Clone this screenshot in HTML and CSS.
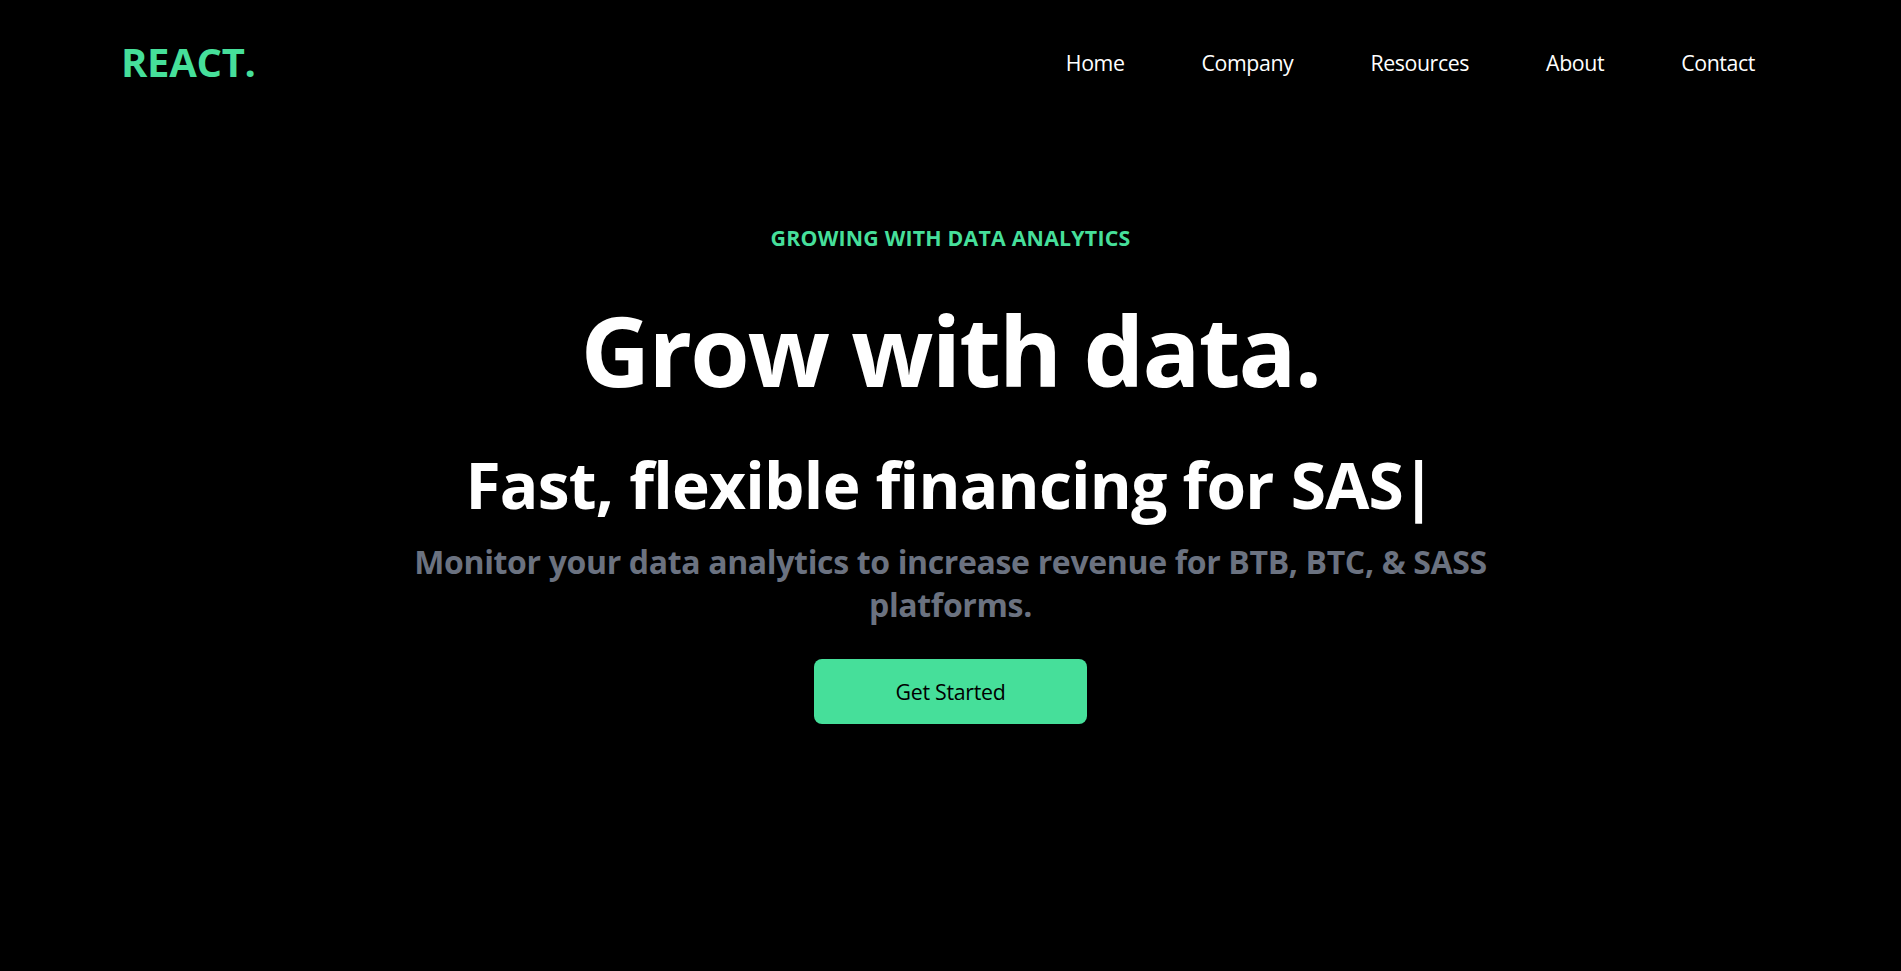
FILE: index.html
```html
<!DOCTYPE html>
<html lang="en">
<head>
<meta charset="utf-8">
<title>REACT.</title>
<link rel="stylesheet" href="styles.css">
</head>
<body>
  <header class="nav">
    <h1 class="logo">REACT.</h1>
    <ul class="menu">
      <li>Home</li>
      <li>Company</li>
      <li>Resources</li>
      <li>About</li>
      <li>Contact</li>
    </ul>
  </header>
  <main class="hero">
    <p class="eyebrow">GROWING WITH DATA ANALYTICS</p>
    <h2 class="title">Grow with data.</h2>
    <div class="typed-row">
      <p class="typed-static">Fast, flexible financing for</p>
      <span class="typed-word">SAS</span><span class="typed-cursor">|</span>
    </div>
    <p class="subtitle">Monitor your data analytics to increase revenue for BTB, BTC, &amp; SASS platforms.</p>
    <button class="btn">Get Started</button>
  </main>
</body>
</html>
```

FILE: styles.css
```css
html, body {
  margin: 0;
  padding: 0;
  background: #000;
}

body {
  font-family: "Open Sans", "Noto Sans", "DejaVu Sans", sans-serif;
  color: #fff;
  overflow: hidden;
}

.nav {
  display: flex;
  justify-content: space-between;
  align-items: center;
  height: 128px;
  max-width: 1653px;
  margin: 0 auto;
}

.logo {
  margin: 0 0 0 -3px;
  padding-bottom: 5px;
  font-size: 40px;
  font-weight: 700;
  color: #46df9a;
  letter-spacing: -0.3px;
}

.menu {
  display: flex;
  gap: 35px;
  list-style: none;
  margin: 0;
  padding: 0 1px 2px 0;
}

.menu li {
  padding: 0 21px;
  font-size: 21.33px;
  line-height: 32px;
  letter-spacing: -0.4px;
}

.hero {
  display: flex;
  flex-direction: column;
  align-items: center;
  text-align: center;
  padding-top: 94px;
}

.eyebrow {
  margin: 0;
  font-size: 21.33px;
  line-height: 32px;
  font-weight: 700;
  color: #46df9a;
  letter-spacing: 0.2px;
}

.title {
  margin: 48px 0 0;
  font-size: 96px;
  line-height: 96px;
  font-weight: 700;
  letter-spacing: -1.8px;
}

.typed-row {
  display: flex;
  justify-content: center;
  align-items: center;
  margin-top: 55px;
  font-size: 64px;
  line-height: 64px;
  font-weight: 700;
  letter-spacing: -0.75px;
}

.typed-static {
  margin: 0;
}

.typed-word {
  padding-left: 17px;
}

.typed-cursor {
  font-weight: 700;
  margin-left: -2px;
}

.subtitle {
  margin: 24px 0 0;
  max-width: 1110px;
  font-size: 32px;
  line-height: 42.67px;
  font-weight: 700;
  color: #6b7280;
  letter-spacing: -0.35px;
}

.btn {
  margin-top: 33px;
  width: 273px;
  height: 65px;
  border: 0;
  border-radius: 8px;
  background: #46df9a;
  color: #000;
  font-family: inherit;
  font-size: 21.33px;
  font-weight: 500;
  letter-spacing: -0.3px;
}
```
